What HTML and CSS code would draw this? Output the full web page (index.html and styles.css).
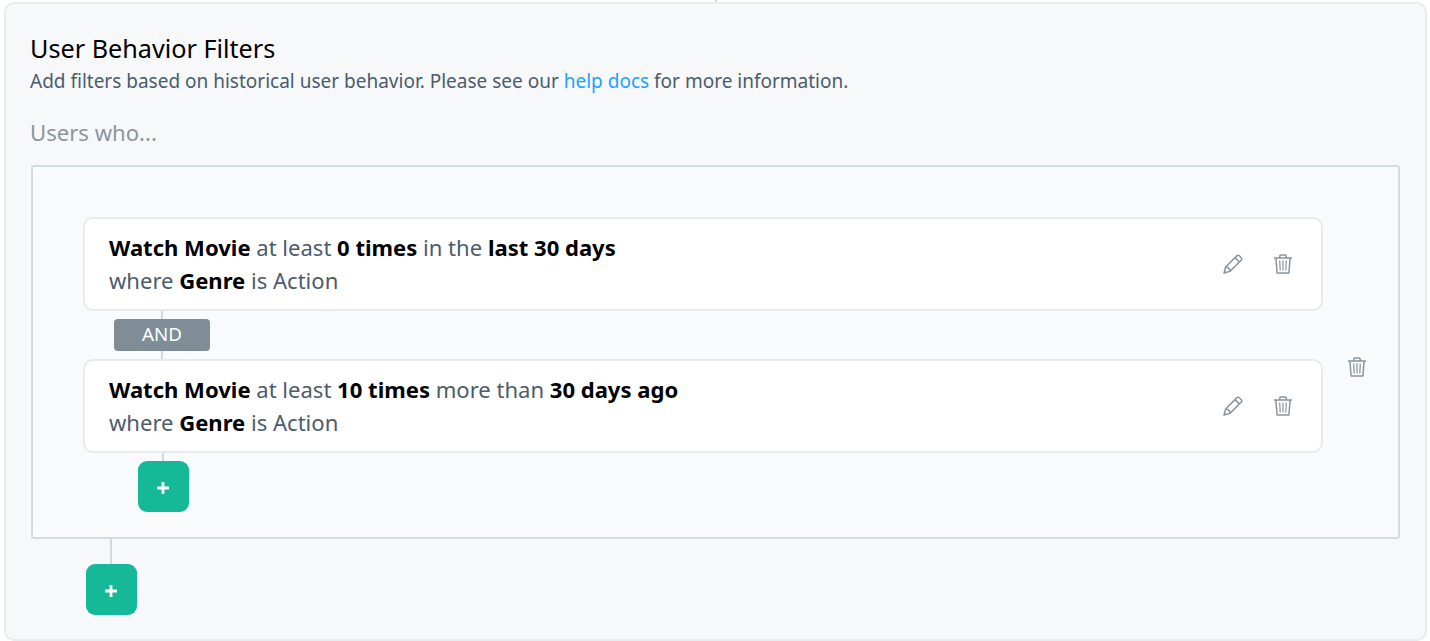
FILE: index.html
```html
<!DOCTYPE html>
<html lang="en">
<head>
<meta charset="utf-8">
<title>User Behavior Filters</title>
<link rel="stylesheet" href="styles.css">
</head>
<body>
<svg class="sprite" width="0" height="0">
  <symbol id="pencil" viewBox="0 0 20 20">
    <path d="M1 19 2.6 13 13.7 1.9Q15 .7 16.3 1.8L18.2 3.7Q19.3 5 18.1 6.3L7 17.4Z M12 3.6 16.4 8 M2.6 13Q5.8 12.9 5.4 14.6Q7.1 14.2 7 17.4 M1.2 18.8 2.6 17.4"/>
  </symbol>
  <symbol id="trash" viewBox="0 0 20 20">
    <path d="M1 3.9H19 M6.8 3.7V2Q6.8 1 7.8 1H12.2Q13.2 1 13.2 2V3.7 M2.9 4 4.1 19H15.9L17.1 4"/>
    <path class="slats" d="M6.7 6.5 7.2 16.5 M10 6.5V16.5 M13.3 6.5 12.8 16.5"/>
  </symbol>
</svg>
<div class="connector connector-top"></div>
<main class="panel">
  <h1 class="title">User Behavior Filters</h1>
  <p class="description">Add filters based on historical user behavior. Please see our <a class="link" href="#">help docs</a> for more information.</p>
  <p class="lead">Users who...</p>
  <section class="group">
    <div class="rules">
      <article class="card">
        <div class="rule"><b>Watch Movie</b> at least <b>0 times</b> in the <b>last 30 days</b><br>where <b>Genre</b> is Action</div>
        <div class="actions">
          <svg class="icon"><use href="#pencil"/></svg>
          <svg class="icon"><use href="#trash"/></svg>
        </div>
      </article>
      <div class="join">
        <div class="connector connector-short"></div>
        <div class="operator">AND</div>
        <div class="connector connector-short"></div>
      </div>
      <article class="card">
        <div class="rule"><b>Watch Movie</b> at least <b>10 times</b> more than <b>30 days ago</b><br>where <b>Genre</b> is Action</div>
        <div class="actions">
          <svg class="icon"><use href="#pencil"/></svg>
          <svg class="icon"><use href="#trash"/></svg>
        </div>
      </article>
      <div class="join join-add">
        <div class="connector connector-short"></div>
        <button class="add" aria-label="Add rule"><svg class="plus" viewBox="0 0 12 12"><path d="M6 0V12M0 6H12"/></svg></button>
      </div>
    </div>
    <svg class="icon group-delete"><use href="#trash"/></svg>
  </section>
  <div class="join join-group">
    <div class="connector connector-long"></div>
    <button class="add" aria-label="Add group"><svg class="plus" viewBox="0 0 12 12"><path d="M6 0V12M0 6H12"/></svg></button>
  </div>
</main>
</body>
</html>
```
FILE: styles.css
```css
* { box-sizing: border-box; }
body {
  margin: 0;
  height: 641px;
  overflow: hidden;
  background: #fff;
  font-family: "Noto Sans", sans-serif;
  color: #4b5c6d;
}
.sprite { display: none; }
.connector { width: 2px; background: #d0dae1; }
.connector-top { height: 2px; margin-left: 715px; }
.connector-short { height: 8px; }
.connector-long { height: 25px; }
.panel {
  width: 1423px;
  height: 639px;
  margin-left: 4px;
  padding: 27px 24px 0;
  border: 2px solid #e7ecef;
  border-radius: 10px;
  background: #f6f8fa;
}
.title {
  margin: 0;
  font-size: 25.2px;
  font-weight: 400;
  line-height: 34px;
  color: #000;
}
.description {
  margin: 1px 0 0;
  font-size: 19.01px;
  line-height: 31px;
  white-space: nowrap;
}
.link { color: #1fa2ff; text-decoration: none; }
.lead {
  margin: 18px 0 16px;
  font-size: 22.1px;
  line-height: 34px;
  color: #8b969f;
}
.group {
  display: flex;
  align-items: flex-start;
  justify-content: space-between;
  width: 1369px;
  height: 374px;
  margin-left: 1px;
  padding: 50px 31px 0 50px;
  border: 2px solid #d2dce1;
  border-radius: 3px;
  background: #f9fafc;
}
.rules { width: 1240px; }
.card {
  display: flex;
  align-items: center;
  justify-content: space-between;
  height: 94px;
  padding: 0 28px 0 24px;
  border: 2px solid #e7ebee;
  border-radius: 10px;
  background: #fff;
}
.rule { font-size: 22.05px; line-height: 33px; white-space: nowrap; }
.rule b { color: #000; }
.actions { display: flex; gap: 30px; }
.icon {
  width: 20px;
  height: 20px;
  fill: none;
  stroke: #8a959e;
  stroke-width: 1.5;
  stroke-linejoin: round;
}
.group-delete { margin-top: 140px; }
.slats { stroke-width: 1.2; }
.join {
  display: flex;
  flex-direction: column;
  align-items: center;
  width: 96px;
  margin-left: 31px;
}
.operator {
  width: 96.5px;
  height: 32px;
  border-radius: 4px;
  background: #7e8d96;
  color: #fff;
  font-size: 18.8px;
  line-height: 31px;
  text-align: center;
}
.join-add { width: 50.5px; margin-left: 55px; }
.join-group { width: 50.5px; margin-left: 56px; }
.add {
  display: grid;
  place-items: center;
  width: 50.5px;
  height: 50.5px;
  padding: 3px 1px 0 0;
  border: 0;
  border-radius: 9px;
  background: #15b897;
}
.plus { width: 12px; height: 12px; fill: none; stroke: #fff; stroke-width: 2.8; }
```
